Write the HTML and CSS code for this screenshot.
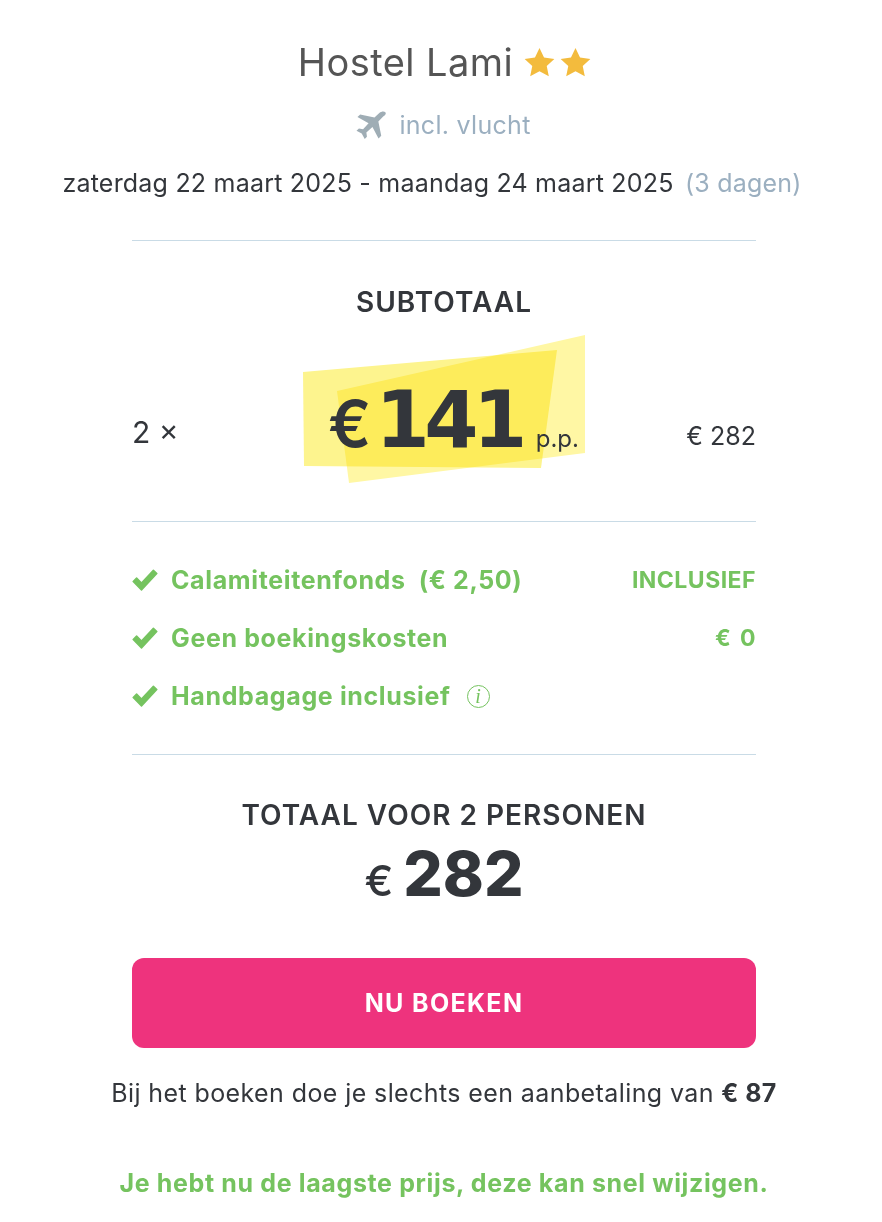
FILE: index.html
```html
<!DOCTYPE html>
<html lang="en">
<head>
    <meta charset="UTF-8">
    <title>Hostel Lami</title>
    <link rel="stylesheet" href="styles.css">
</head>
<body>
    <div class="header">
        <h1 class="title">Hostel Lami
            <span class="stars">
                <svg viewBox="0 0 24 24"><path d="M12 .8l3.500 7.400 8 1-5.900 5.500 1.600 8L12 18.800l-7.200 3.900 1.600-8L.5 9.200l8-1z"/></svg>
                <svg viewBox="0 0 24 24"><path d="M12 .8l3.500 7.400 8 1-5.900 5.500 1.600 8L12 18.800l-7.200 3.900 1.600-8L.5 9.200l8-1z"/></svg>
            </span>
        </h1>
        <div class="flight">
            <svg class="plane" viewBox="0 0 32 30"><path d="M30.600 1c-1.500-1-4-.6-6 1l-5 4.700L4.800 3.500 2 6.200l11.500 6.500-5.700 6.200-4.300-.7L1 20.500l5.400 2.900L9.500 29l2.300-2.300-.6-4.500 6.300-5.600 6.300 11.800 2.800-2.700-3-14.900 5-5C31.600 4 31.900 2.200 30.600 1z"/></svg>
            <span>incl. vlucht</span>
        </div>
        <p class="dates">zaterdag 22 maart 2025 - maandag 24 maart 2025 <span class="days">(3 dagen)</span></p>
    </div>

    <div class="summary">
        <section class="price-block">
            <h2 class="label">SUBTOTAAL</h2>
            <div class="price-row">
                <span class="count">2 ×</span>
                <div class="price">
                    <svg class="highlight" viewBox="0 0 282 148">
                        <polygon class="shape-back" points="0,37 254,15 238,133 1,131"/>
                        <polygon class="shape-front" points="34,56 282,0 282,118 46,148"/>
                    </svg>
                    <span class="euro">€</span><span class="amount">141</span><span class="pp">p.p.</span>
                </div>
                <span class="row-total">€ 282</span>
            </div>
        </section>

        <ul class="extras">
            <li>
                <span class="extra-name">
                    <svg class="check" viewBox="0 0 26 22"><path d="M9.500 21L1.200 12.500l3.400-3.400 4.900 5L21.400 1.200l3.400 3.400z"/></svg>
                    Calamiteitenfonds&nbsp; (€ 2,50)
                </span>
                <span class="extra-value">INCLUSIEF</span>
            </li>
            <li>
                <span class="extra-name">
                    <svg class="check" viewBox="0 0 26 22"><path d="M9.500 21L1.200 12.500l3.400-3.400 4.900 5L21.400 1.200l3.400 3.400z"/></svg>
                    Geen boekingskosten
                </span>
                <span class="extra-value">€ 0</span>
            </li>
            <li>
                <span class="extra-name">
                    <svg class="check" viewBox="0 0 26 22"><path d="M9.500 21L1.200 12.500l3.400-3.400 4.900 5L21.400 1.200l3.400 3.400z"/></svg>
                    Handbagage inclusief
                    <span class="info">i</span>
                </span>
            </li>
        </ul>

        <section class="total-block">
            <h2 class="label">TOTAAL VOOR 2 PERSONEN</h2>
            <div class="total"><span class="total-euro">€</span><span class="total-amount">282</span></div>
        </section>

        <button type="button" class="book-btn">NU BOEKEN</button>
    </div>

    <p class="deposit">Bij het boeken doe je slechts een aanbetaling van <b>€ 87</b></p>
    <p class="lowest">Je hebt nu de laagste prijs, deze kan snel wijzigen.</p>
</body>
</html>
```

FILE: styles.css
```css
* {
    margin: 0;
    padding: 0;
    box-sizing: border-box;
}

body {
    background: #ffffff;
    color: #33363b;
    font-family: "Inter", "Liberation Sans", sans-serif;
    text-align: center;
}

/* Header */
.header {
    padding-top: 39px;
}

.title {
    font-size: 38px;
    font-weight: 400;
    line-height: 46px;
    letter-spacing: 0.45px;
    padding-left: 7px;
    color: #555555;
}

.stars {
    display: inline-flex;
    gap: 5px;
    vertical-align: -2px;
}

.stars svg {
    width: 31px;
    height: 31px;
    fill: #f3bb3d;
}

.flight {
    display: flex;
    justify-content: center;
    align-items: center;
    gap: 12px;
    margin-top: 22px;
    padding-left: 4px;
    height: 36px;
    font-size: 25px;
    letter-spacing: 0.3px;
    color: #9bafc0;
}

.plane {
    width: 32px;
    height: 29px;
    fill: #9fadb5;
}

.dates {
    margin-top: 22px;
    padding-right: 18px;
    height: 36px;
    line-height: 36px;
    font-size: 25px;
    letter-spacing: 0.21px;
    color: #33363b;
}

.days {
    margin-left: 4px;
    color: #9bafc0;
}

/* Summary column */
.summary {
    margin: 39px 126px 0 132px;
}

.price-block {
    border-top: 1px solid #c9dbe6;
    padding-top: 43px;
    height: 281px;
}

.label {
    font-size: 28px;
    font-weight: 600;
    line-height: 36px;
    letter-spacing: 1px;
    margin-bottom: 1px;
    color: #33363b;
}

.price-row {
    display: flex;
    justify-content: space-between;
    align-items: flex-start;
    position: relative;
    height: 150px;
}

.count {
    font-size: 30px;
    margin-top: 93px;
}

.row-total {
    font-size: 25px;
    margin-top: 100px;
}

.price {
    position: relative;
    display: flex;
    align-items: baseline;
    padding-top: 53px;
    margin-left: 42px;
}

.highlight {
    position: absolute;
    top: 14px;
    left: -25px;
    width: 282px;
    height: 148px;
}

.shape-back {
    fill: #fdf48e;
}

.shape-front {
    fill: #fff7a4;
    mix-blend-mode: multiply;
}

.euro, .amount, .pp {
    position: relative;
}

.euro {
    font-size: 64px;
    font-weight: 600;
    line-height: 92px;
    letter-spacing: -1px;
}

.amount {
    font-family: "DejaVu Sans", sans-serif;
    font-size: 78px;
    font-weight: 700;
    letter-spacing: -5.5px;
    margin-left: 5px;
    line-height: 92px;
}

.pp {
    font-size: 24px;
    margin-left: 14px;
}

/* Extras */
.extras {
    list-style: none;
    border-top: 1px solid #c9dbe6;
    padding: 29px 0 29px;
    color: #75c35f;
    font-size: 25px;
    font-weight: 700;
    letter-spacing: 0.63px;
}

.extras li {
    display: flex;
    justify-content: space-between;
    align-items: center;
    height: 58px;
}

.extra-name {
    display: flex;
    align-items: center;
}

.check {
    width: 26px;
    height: 22px;
    fill: #75c35f;
    stroke: #75c35f;
    stroke-width: 1.5;
    stroke-linejoin: round;
    margin-right: 13px;
}

.extra-value {
    font-size: 23px;
    letter-spacing: 0.47px;
    word-spacing: 3px;
}

.info {
    width: 23px;
    height: 23px;
    margin-left: 16px;
    border: 1.5px solid #75c35f;
    border-radius: 50%;
    font-family: "Liberation Serif", serif;
    font-style: italic;
    font-size: 20px;
    font-weight: 400;
    line-height: 20px;
    letter-spacing: 0;
}

/* Total */
.total-block {
    border-top: 1px solid #c9dbe6;
    padding-top: 42px;
}

.total {
    display: flex;
    justify-content: center;
    align-items: baseline;
    padding-top: 8px;
    height: 72px;
}

.total-euro {
    font-size: 43px;
    font-weight: 500;
    margin-right: 10px;
}

.total-amount {
    font-size: 62px;
    font-weight: 800;
    line-height: 64px;
}

.book-btn {
    display: block;
    width: 100%;
    height: 90px;
    margin-top: 52px;
    border: none;
    border-radius: 12px;
    background: #ee337d;
    color: #ffffff;
    font-family: inherit;
    font-size: 25px;
    font-weight: 700;
    letter-spacing: 1.35px;
}

/* Footer notes */
.deposit {
    margin-top: 27px;
    padding-left: 6px;
    line-height: 36px;
    font-size: 25px;
    letter-spacing: 0.4px;
}

.lowest {
    margin-top: 54px;
    padding-left: 6px;
    line-height: 36px;
    font-size: 25px;
    font-weight: 700;
    letter-spacing: 0.64px;
    color: #75c35f;
}
```
